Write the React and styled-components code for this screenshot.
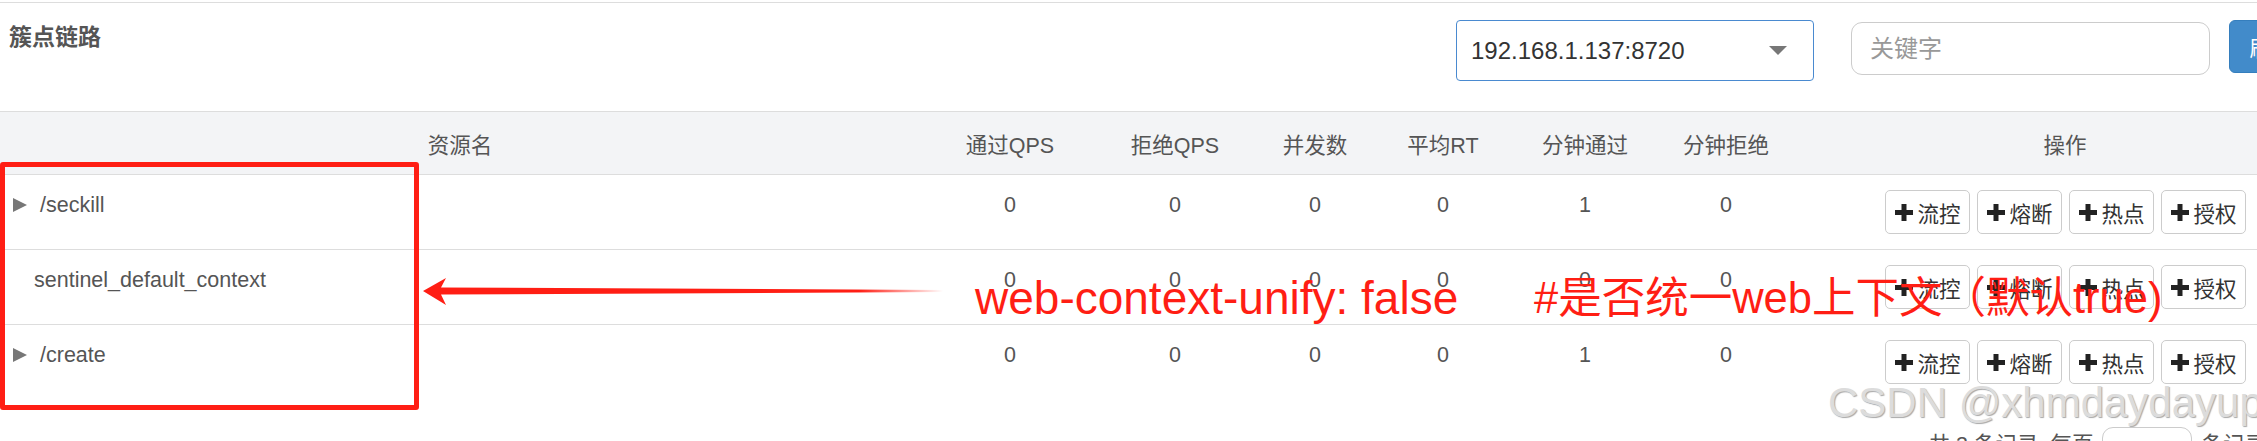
import React from 'react';
import styled, { createGlobalStyle } from 'styled-components';

const GlobalStyle = createGlobalStyle`
  html, body {
    margin: 0;
    padding: 0;
    background: #fff;
    overflow: hidden;
  }
  body {
    font-family: "Liberation Sans", Arial, "Noto Sans CJK SC", sans-serif;
  }
`;

const Page = styled.div`
  position: relative;
  width: 2342px;
  height: 441px;
  overflow: hidden;
  color: #555;
  font-size: 21.5px;
`;

const TopRule = styled.div`
  height: 2px;
  border-bottom: 1px solid #ddd;
`;

const Toolbar = styled.div`
  display: flex;
  align-items: flex-start;
  height: 108px;
  padding: 17px 29px 0 9px;
  box-sizing: border-box;
`;

const Title = styled.h3`
  flex: 1;
  margin: 6px 0 0;
  font-size: 23px;
  line-height: 23px;
  font-weight: 700;
  color: #555;
`;

const AppSelect = styled.div`
  display: flex;
  align-items: center;
  justify-content: space-between;
  width: 358px;
  height: 61px;
  box-sizing: border-box;
  padding: 0 26px 0 14px;
  border: 1px solid #4a8ad0;
  border-radius: 4px;
  font-size: 24px;
  color: #333;
`;

const Caret = styled.span`
  width: 0;
  height: 0;
  border-left: 9px solid transparent;
  border-right: 9px solid transparent;
  border-top: 9px solid #777;
`;

const SearchInput = styled.input`
  width: 359px;
  height: 53px;
  margin: 2px 0 0 37px;
  box-sizing: border-box;
  padding: 0 18px;
  border: 1px solid #ccc;
  border-radius: 11px;
  font-family: inherit;
  font-size: 24px;
  color: #333;
  outline: none;

  &::placeholder {
    color: #999;
  }
`;

const RefreshButton = styled.button`
  width: 84px;
  height: 53px;
  margin-left: 19px;
  border: 1px solid #357ebd;
  border-radius: 6px;
  background: #428bca;
  color: #fff;
  font-family: inherit;
  font-size: 21.5px;
`;

const Table = styled.table`
  width: 100%;
  table-layout: fixed;
  border-collapse: separate;
  border-spacing: 0;
`;

const HeadCell = styled.th`
  height: 62px;
  padding: 0;
  background: #f3f4f6;
  border-top: 1px solid #ddd;
  font-weight: 400;
  font-size: 21.5px;
  color: #555;
  text-align: center;
  vertical-align: middle;
`;

const Cell = styled.td`
  padding: 15px 10px 15px;
  border-top: 1px solid #ddd;
  line-height: 30px;
  text-align: center;
  vertical-align: top;
`;

const NameCell = styled(Cell)`
  padding-left: ${p => (p.$leaf ? '34px' : '13px')};
  text-align: left;
`;

const NameLine = styled.div`
  display: flex;
  align-items: center;
  height: 30px;
`;

const Expander = styled.span`
  width: 0;
  height: 0;
  margin-right: 13px;
  border-left: 14px solid #777;
  border-top: 7.5px solid transparent;
  border-bottom: 7.5px solid transparent;
`;

const Actions = styled.div`
  display: flex;
  justify-content: center;
  gap: 7px;
  height: 44px;
`;

const RuleButton = styled.button`
  display: flex;
  align-items: center;
  gap: 5px;
  width: 85px;
  height: 44px;
  box-sizing: border-box;
  padding: 0 0 0 9px;
  border: 1px solid #ccc;
  border-radius: 5px;
  background: #fff;
  color: #333;
  font-family: inherit;
  font-size: 21.5px;
`;

const Pager = styled.div`
  display: flex;
  align-items: flex-start;
  justify-content: flex-end;
  gap: 9px;
  margin-top: 28px;
  padding-right: 76px;
  font-size: 21.5px;
  color: #555;
`;

const PageSize = styled.div`
  width: 90px;
  height: 44px;
  box-sizing: border-box;
  border: 1px solid #ccc;
  border-radius: 11px;
  text-align: center;
  line-height: 42px;
  color: #333;
`;

const RedFrame = styled.div`
  position: absolute;
  left: 0;
  top: 162px;
  width: 419px;
  height: 248px;
  box-sizing: border-box;
  border: 5px solid #ff1e14;
  border-radius: 3px;
`;

const ArrowSvg = styled.svg`
  position: absolute;
  left: 418px;
  top: 270px;
`;

const Note = styled.div`
  position: absolute;
  left: 975px;
  top: 276px;
  display: flex;
  white-space: nowrap;
  color: #ff1e14;
  line-height: 44px;
`;

const NoteKey = styled.span`
  width: 559px;
  font-size: 46px;
`;

const NoteText = styled.span`
  font-size: 43.5px;
`;

const Watermark = styled.div`
  position: absolute;
  left: 1828px;
  top: 382px;
  font-size: 42px;
  line-height: 42px;
  white-space: nowrap;
  color: #dcdcdc;
  text-shadow: 1px 1px 1px #a8a8a8;
`;

const PlusIcon = () => (
  <svg width="18" height="17" viewBox="0 0 18 17">
    <rect x="6.5" y="0" width="5" height="17" fill="#222" />
    <rect x="0" y="6" width="18" height="5" fill="#222" />
  </svg>
);

const columns = [
  { label: '资源名', width: 920 },
  { label: '通过QPS', width: 180 },
  { label: '拒绝QPS', width: 150 },
  { label: '并发数', width: 130 },
  { label: '平均RT', width: 126 },
  { label: '分钟通过', width: 158 },
  { label: '分钟拒绝', width: 124 },
  { label: '操作' },
];

const resources = [
  { name: '/seckill', leaf: false, stats: [0, 0, 0, 0, 1, 0] },
  { name: 'sentinel_default_context', leaf: true, stats: [0, 0, 0, 0, 0, 0] },
  { name: '/create', leaf: false, stats: [0, 0, 0, 0, 1, 0] },
];

const ruleTypes = ['流控', '熔断', '热点', '授权'];

const App = () => (
  <Page>
    <GlobalStyle />
    <TopRule />
    <Toolbar>
      <Title>簇点链路</Title>
      <AppSelect>
        <span>192.168.1.137:8720</span>
        <Caret />
      </AppSelect>
      <SearchInput placeholder="关键字" />
      <RefreshButton>刷新</RefreshButton>
    </Toolbar>

    <Table>
      <colgroup>
        {columns.map(({ label, width }) => (
          <col key={label} style={width ? { width } : undefined} />
        ))}
      </colgroup>
      <thead>
        <tr>
          {columns.map(({ label }) => (
            <HeadCell key={label}>{label}</HeadCell>
          ))}
        </tr>
      </thead>
      <tbody>
        {resources.map(({ name, leaf, stats }) => (
          <tr key={name}>
            <NameCell $leaf={leaf}>
              <NameLine>
                {!leaf && <Expander />}
                {name}
              </NameLine>
            </NameCell>
            {stats.map((value, i) => (
              <Cell key={i}>{value}</Cell>
            ))}
            <Cell>
              <Actions>
                {ruleTypes.map(type => (
                  <RuleButton key={type}>
                    <PlusIcon />
                    {type}
                  </RuleButton>
                ))}
              </Actions>
            </Cell>
          </tr>
        ))}
      </tbody>
    </Table>

    <Pager>
      <span>共 3 条记录, 每页</span>
      <PageSize>10</PageSize>
      <span>条记录</span>
    </Pager>

    <RedFrame />
    <ArrowSvg width="540" height="42" viewBox="0 0 540 42">
      <defs>
        <linearGradient id="shaftFade" gradientUnits="userSpaceOnUse" x1="0" y1="0" x2="525" y2="0">
          <stop offset="0.84" stopColor="#ff1e14" />
          <stop offset="1" stopColor="#ff1e14" stopOpacity="0" />
        </linearGradient>
      </defs>
      <path d="M5 21 L28 8 L23 17.5 L525 20 L525 22 L23 24.5 L28 35 Z" fill="url(#shaftFade)" />
    </ArrowSvg>
    <Note>
      <NoteKey>web-context-unify: false</NoteKey>
      <NoteText>#是否统一web上下文（默认true)</NoteText>
    </Note>
    <Watermark>CSDN @xhmdaydayup</Watermark>
  </Page>
);

export default App;
